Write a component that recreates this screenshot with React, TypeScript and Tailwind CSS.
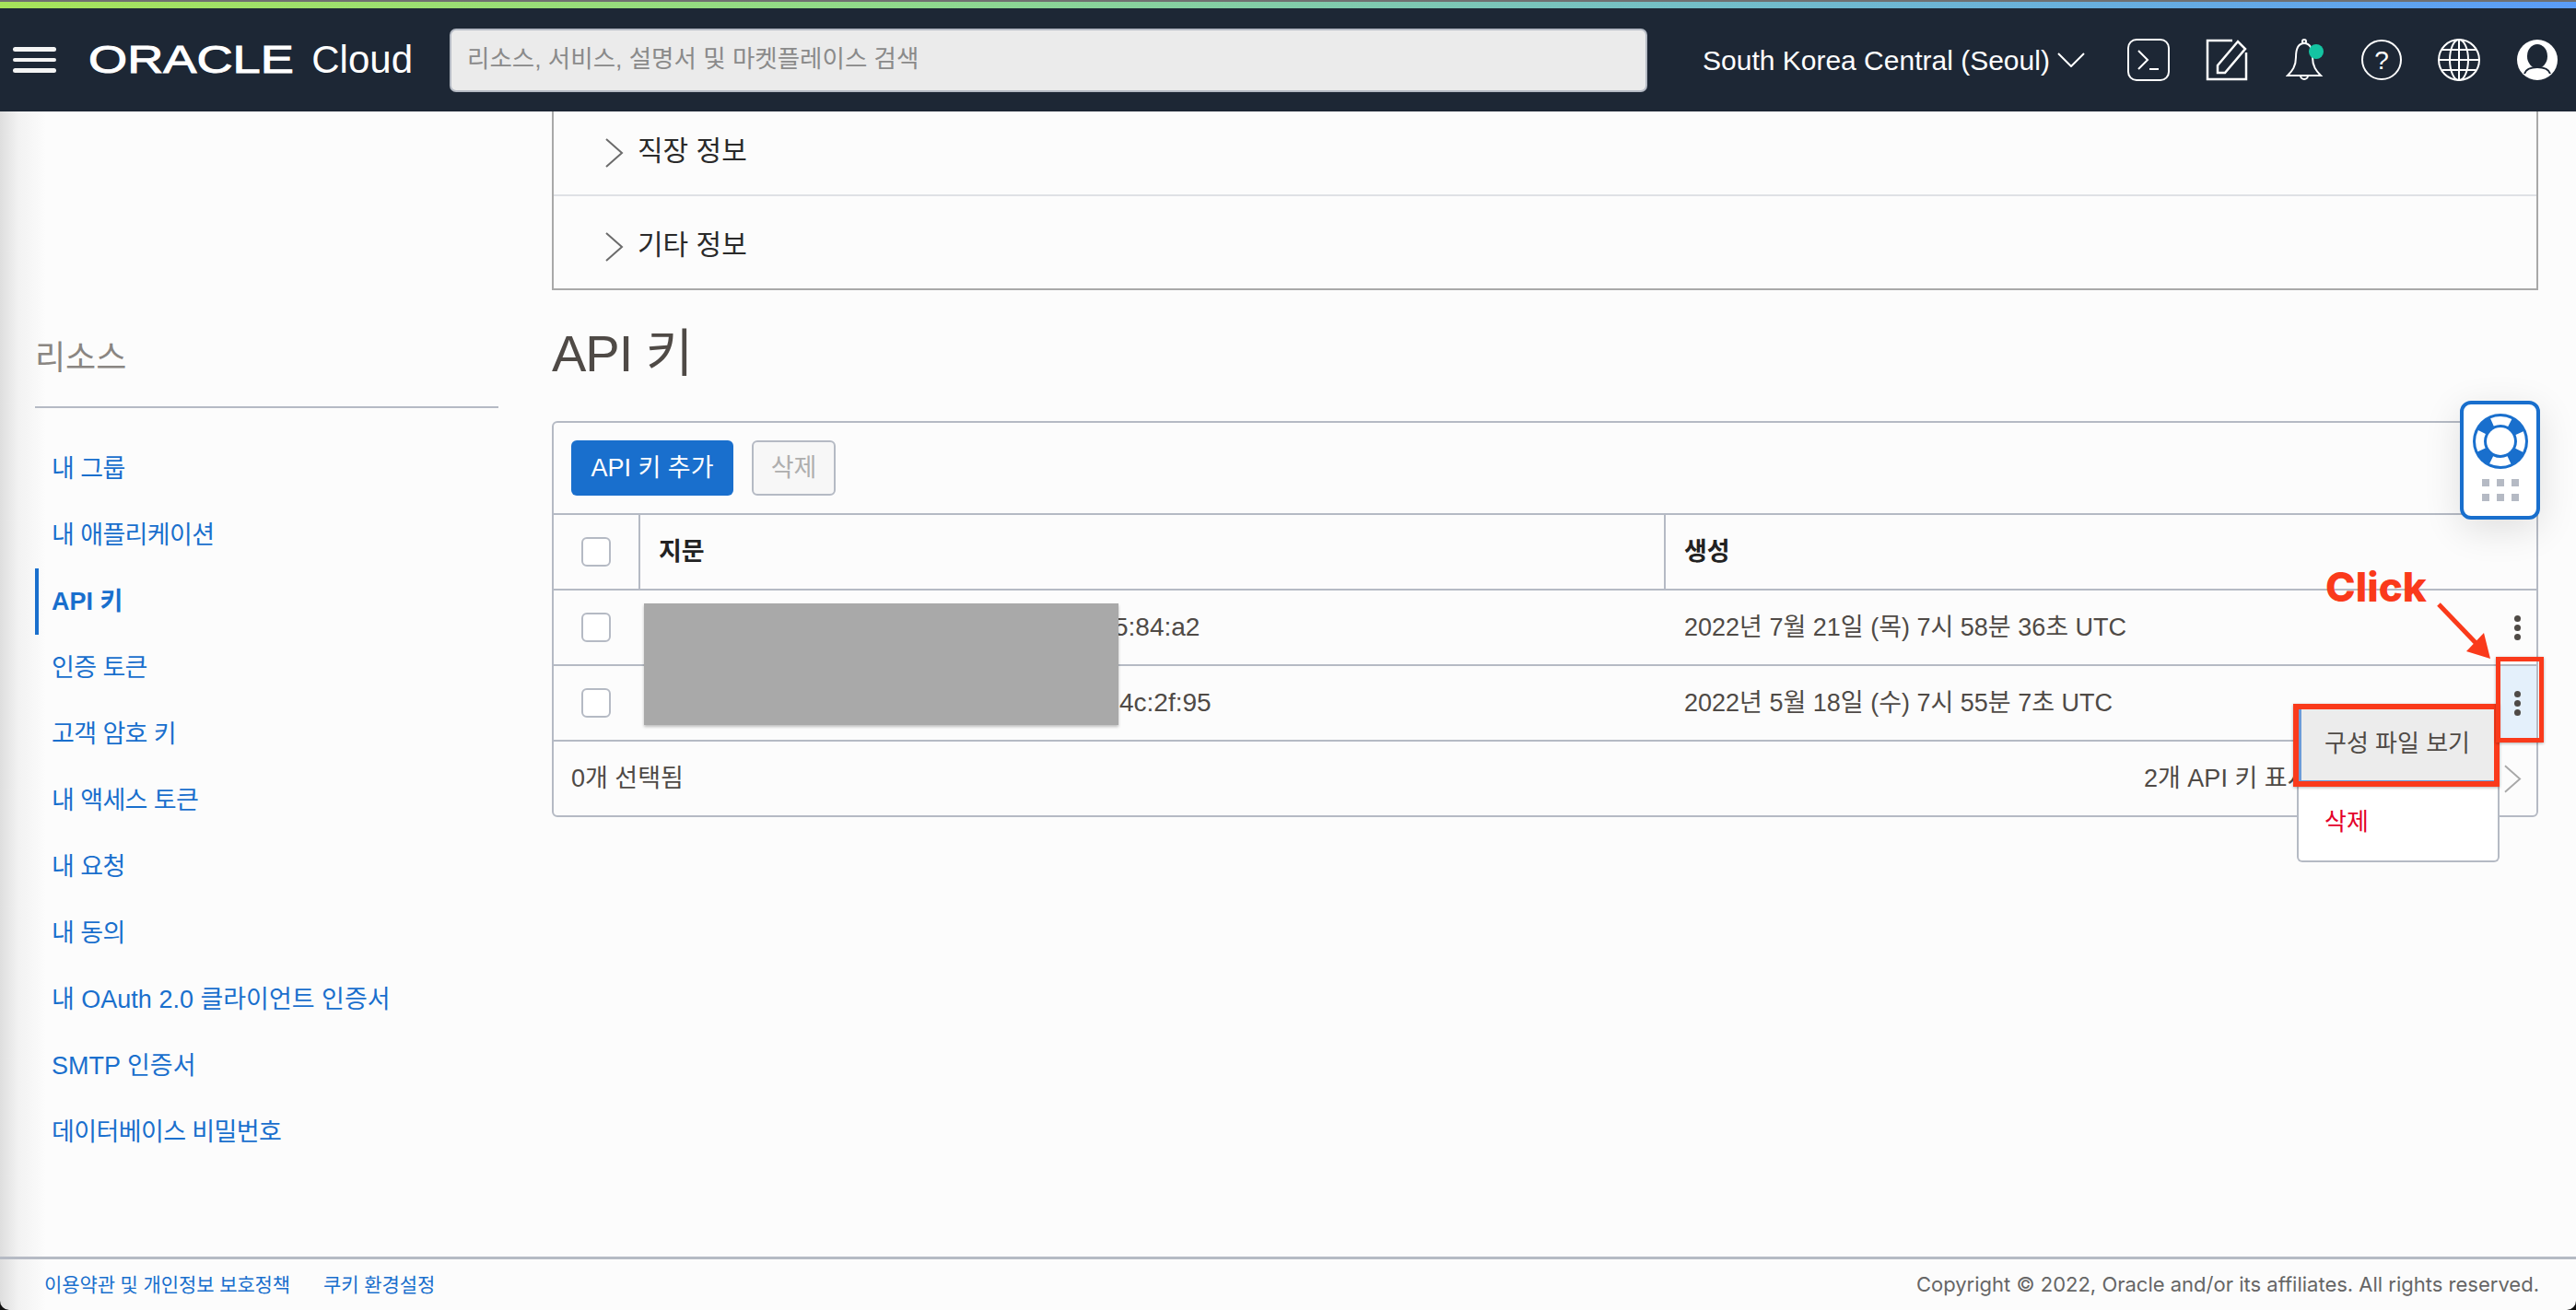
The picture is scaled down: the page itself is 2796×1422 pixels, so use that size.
import { ReactNode } from 'react';

const resourceLinks = [
  '내 그룹',
  '내 애플리케이션',
  'API 키',
  '인증 토큰',
  '고객 암호 키',
  '내 액세스 토큰',
  '내 요청',
  '내 동의',
  '내 OAuth 2.0 클라이언트 인증서',
  'SMTP 인증서',
  '데이터베이스 비밀번호',
];

const Chevron = ({ className }: { className: string }) => (
  <svg className={className} viewBox="0 0 20 32" fill="none" stroke="currentColor" strokeWidth="2">
    <path d="M1 1l17 15L1 31" />
  </svg>
);

const Kebab = () => (
  <div className="flex flex-col gap-[3px]">
    <span className="size-[7px] rounded-full bg-[#4f4a46]" />
    <span className="size-[7px] rounded-full bg-[#4f4a46]" />
    <span className="size-[7px] rounded-full bg-[#4f4a46]" />
  </div>
);

const Checkbox = () => <span className="block size-[32px] rounded-[6px] border-2 border-[#b5bac4] bg-white" />;

const Header = () => (
  <header className="flex h-[112px] shrink-0 items-center bg-[#1d2735] text-white">
    <div className="ml-[14px] flex h-[28px] w-[47px] flex-col justify-between">
      <span className="h-[5px] rounded-sm bg-[#f4f4f4]" />
      <span className="h-[4px] rounded-sm bg-[#f4f4f4]" />
      <span className="h-[5px] rounded-sm bg-[#f4f4f4]" />
    </div>
    <div className="ml-[35px] flex w-[352px] items-center">
      <span className="w-[243px] origin-left scale-x-[1.29] text-[42px] leading-none [-webkit-text-stroke:1px_white]">ORACLE</span>
      <span className="text-[42px] leading-none">Cloud</span>
    </div>
    <div className="ml-[40px] flex h-[69px] w-[1300px] items-center rounded-[7px] border-2 border-[#b5bac4] bg-[#ebebeb] px-[17px] text-[26.5px] text-[#8a8a8a]">
      리소스, 서비스, 설명서 및 마켓플레이스 검색
    </div>
    <span className="ml-[60px] text-[30px] whitespace-nowrap">South Korea Central (Seoul)</span>
    <svg className="ml-[8px] h-[16px] w-[30px]" viewBox="0 0 30 16" fill="none" stroke="currentColor" strokeWidth="2">
      <path d="M1 1l14 14L29 1" />
    </svg>
    <svg className="ml-[46px] size-[46px]" viewBox="0 0 46 46" fill="none" stroke="currentColor" strokeWidth="2">
      <rect x="1" y="1" width="44" height="44" rx="9" />
      <path d="M12 13l10 10-10 10M24 33h10" />
    </svg>
    <svg className="ml-[39px] size-[46px]" viewBox="0 0 46 46" fill="none" stroke="currentColor" strokeWidth="2.5">
      <path d="M29 2H2v42h42V15" />
      <path d="M13 29L35 3l8 8-22 26h-8z" />
    </svg>
    <svg className="ml-[41px] h-[46px] w-[42px]" viewBox="0 0 42 46" fill="none" stroke="currentColor" strokeWidth="2">
      <circle cx="20" cy="3" r="2" />
      <path d="M20 5c-7 0-9 7-9 15 0 10-4 15-9 20h36c-5-5-9-10-9-20 0-8-2-15-9-15z" />
      <path d="M16 40a4 4 0 0 0 8 0" />
      <ellipse cx="33" cy="14" rx="8" ry="8" fill="#14c4a2" stroke="none" />
    </svg>
    <svg className="ml-[40px] size-[44px]" viewBox="0 0 44 44" fill="none" stroke="currentColor" strokeWidth="2">
      <circle cx="22" cy="22" r="21" />
      <text x="22" y="32" textAnchor="middle" fontSize="28" fill="currentColor" stroke="none">?</text>
    </svg>
    <svg className="ml-[39px] size-[46px]" viewBox="0 0 46 46" fill="none" stroke="currentColor" strokeWidth="2">
      <circle cx="23" cy="23" r="22" />
      <ellipse cx="23" cy="23" rx="10" ry="22" />
      <path d="M23 1v44M1 23h44M5 12h36M5 34h36" />
    </svg>
    <svg className="ml-[40px] size-[44px]" viewBox="0 0 44 44">
      <circle cx="22" cy="22" r="22" fill="#fff" />
      <ellipse cx="22" cy="18" rx="11" ry="13" fill="#1d2735" />
      <path d="M8 37c2-6 8-7 14-7s12 1 14 7" fill="none" stroke="#1d2735" strokeWidth="2" />
    </svg>
  </header>
);

const Sidebar = () => (
  <aside className="w-[599px] shrink-0 pr-[58px] pl-[38px]">
    <div className="mt-[246px] border-b-2 border-[#b5bac4] pb-[30px] text-[36px] leading-[44px] text-[#8a8682]">리소스</div>
    <ul className="mt-[30px]">
      {resourceLinks.map((label) => (
        <li
          key={label}
          className={
            label === 'API 키'
              ? 'flex h-[72px] items-center border-l-4 border-[#196fcd] pl-[14px] text-[27px] font-bold text-[#196fcd]'
              : /[A-Za-z]/.test(label)
                ? 'flex h-[72px] items-center pl-[18px] text-[27px] text-[#196fcd]'
                : 'flex h-[72px] items-center pl-[18px] text-[27px] tracking-[-0.6px] text-[#196fcd]'
          }
        >
          {label}
        </li>
      ))}
    </ul>
  </aside>
);

const Row = ({ fingerprintClass, fingerprint, created, active }: { fingerprintClass: string; fingerprint: string; created: string; active?: boolean }) => (
  <div className="grid h-[82px] grid-cols-[92px_1113px_1fr_42px] items-center border-b-2 border-[#b5bac4] text-[#4f4a46]">
    <div className="flex justify-center"><Checkbox /></div>
    <div className={fingerprintClass}>{fingerprint}</div>
    <div className="pl-[22px] text-[27px] whitespace-nowrap">{created}</div>
    <div className={active ? 'flex h-full items-center justify-center bg-[#e4f0fb]' : 'flex h-full items-center justify-center'}>
      <Kebab />
    </div>
  </div>
);

const HeadCell = ({ children, className }: { children: ReactNode; className: string }) => (
  <div className={className}>{children}</div>
);

const ApiKeyTable = () => (
  <section className="rounded-[6px] border-2 border-[#b5bac4]">
    <div className="flex h-[100px] items-center gap-[20px] border-b-2 border-[#b5bac4] pl-[19px]">
      <button className="h-[60px] w-[176px] rounded-[6px] bg-[#196fcd] text-[27px] text-white">API 키 추가</button>
      <button className="h-[60px] w-[91px] rounded-[6px] border-2 border-[#b5bac4] bg-[#f7f7f7] text-[27px] text-[#aeaeae]">삭제</button>
    </div>
    <div className="grid h-[82px] grid-cols-[92px_1113px_1fr] border-b-2 border-[#b5bac4] text-[27px] font-bold text-[#222]">
      <HeadCell className="flex items-center justify-center"><Checkbox /></HeadCell>
      <HeadCell className="flex items-center border-l-2 border-[#b5bac4] pl-[20px]">지문</HeadCell>
      <HeadCell className="flex items-center border-l-2 border-[#b5bac4] pl-[20px]">생성</HeadCell>
    </div>
    <Row fingerprintClass="pl-[516px] text-[28px]" fingerprint="5:84:a2" created="2022년 7월 21일 (목) 7시 58분 36초 UTC" />
    <Row fingerprintClass="pl-[522px] text-[28px]" fingerprint="4c:2f:95" created="2022년 5월 18일 (수) 7시 55분 7초 UTC" active />
    <div className="flex h-[80px] items-center justify-between pr-[16px] pl-[19px] text-[27px] text-[#4f4a46]">
      <span>0개 선택됨</span>
      <div className="flex items-center">
        <span className="w-[391px] whitespace-nowrap">2개 API 키 표시</span>
        <Chevron className="h-[31px] w-[19px] text-[#a8a8a8]" />
      </div>
    </div>
  </section>
);

const Content = () => (
  <main className="min-w-0 flex-1 pr-[41px]">
    <div className="border-x-2 border-b-2 border-[#a9a9a9] text-[30px] text-[#2a2a2a]">
      <div className="flex h-[92px] items-center gap-[15px] border-b-2 border-[#dfe1e5] pl-[56px]">
        <Chevron className="h-[32px] w-[20px] text-[#6b6b6b]" />
        <span className="pb-[6px]">직장 정보</span>
      </div>
      <div className="flex h-[100px] items-center gap-[15px] pt-[5px] pl-[56px]">
        <Chevron className="mt-[4px] h-[32px] w-[20px] text-[#6b6b6b]" />
        기타 정보
      </div>
    </div>
    <h1 className="mt-[37px] mb-[41px] text-[56px] leading-[64px] tracking-[-1px] text-[#4f4a46]">API 키</h1>
    <ApiKeyTable />
  </main>
);

const Footer = () => (
  <footer className="flex h-[58px] shrink-0 items-center border-t-[3px] border-[#b5bac4] pr-[40px] pl-[48px] text-[21px]">
    <span className="tracking-[-0.1px] text-[#196fcd]">이용약관 및 개인정보 보호정책</span>
    <span className="ml-[36px] tracking-[-0.1px] text-[#196fcd]">쿠키 환경설정</span>
    <span className="ml-auto font-['Inter',sans-serif] text-[22px] text-[#666]">Copyright © 2022, Oracle and/or its affiliates. All rights reserved.</span>
  </footer>
);

const HelpWidget = () => (
  <div className="absolute top-[435px] left-[2670px] flex h-[129px] w-[87px] flex-col items-center rounded-[12px] border-4 border-[#196fcd] bg-white pt-[10px] shadow-[0_10px_40px_rgba(0,0,0,0.12)]">
    <svg className="size-[60px]" viewBox="0 0 60 60">
      <circle cx="30" cy="30" r="30" fill="#196fcd" />
      <circle cx="30" cy="30" r="22.5" fill="none" stroke="#fff" strokeWidth="9" strokeDasharray="20 15.34" strokeDashoffset="10" />
      <circle cx="30" cy="30" r="15" fill="#fff" />
    </svg>
    <div className="mt-[11px] grid grid-cols-3 gap-[8px]">
      {[0, 1, 2, 3, 4, 5].map((i) => (
        <span key={i} className="size-[8px] bg-[#b5bac4]" />
      ))}
    </div>
  </div>
);

const RowMenu = () => (
  <div className="absolute top-[764px] left-[2493px] h-[172px] w-[220px] rounded-b-[6px] border-2 border-t-0 border-[#b5bac4] bg-white text-[26px]">
    <div className="flex h-[86px] items-center border-[3px] border-[#6b9bd8] bg-[#ececec] pl-[25px] text-[#4f4a46]">구성 파일 보기</div>
    <div className="flex h-[84px] items-center pl-[28px] text-[#e4002b]">삭제</div>
  </div>
);

export default function App() {
  return (
    <div className="relative flex h-[1422px] w-[2796px] flex-col overflow-hidden bg-[#fcfcfc] bg-[linear-gradient(to_right,#dedede,#f2f2f2_20px,#fcfcfc_50px)] font-['Liberation_Sans','Noto_Sans_CJK_KR',sans-serif]">
      <div className="h-[2px] shrink-0 bg-[#6f6f70]" />
      <div className="h-[7px] shrink-0 bg-[linear-gradient(to_right,#a6e35a,#8fd98c_35%,#74bfc6_65%,#5a9cf8)]" />
      <Header />
      <div className="flex min-h-0 flex-1">
        <Sidebar />
        <Content />
      </div>
      <Footer />

      {/* redacted fingerprints */}
      <div className="absolute top-[655px] left-[699px] h-[132px] w-[515px] bg-[#a9a9a9] shadow-[0_2px_3px_rgba(0,0,0,0.25)]" />
      <HelpWidget />
      <RowMenu />

      {/* screenshot annotations */}
      <div className="absolute top-[764px] left-[2489px] h-[90px] w-[224px] border-[6px] border-[#fa3a1b] shadow-[0_1px_3px_rgba(0,0,0,0.3)]" />
      <div className="absolute top-[713px] left-[2709px] h-[93px] w-[52px] border-[5px] border-[#fa3a1b] shadow-[0_1px_3px_rgba(0,0,0,0.3)]" />
      <span className="absolute top-[612px] left-[2524px] font-['Inter',sans-serif] text-[44px] leading-[50px] font-extrabold text-[#fa3a1b]">Click</span>
      <svg className="absolute top-[650px] left-[2640px] h-[70px] w-[70px]" viewBox="0 0 70 70">
        <path d="M7 6l48 50" fill="none" stroke="#fa3a1b" strokeWidth="5" />
        <path d="M63 65L37 57 56 37z" fill="#fa3a1b" />
      </svg>

      {/* window corners */}
      <svg className="absolute bottom-0 left-0 size-[10px]" viewBox="0 0 10 10">
        <path d="M0 0a10 10 0 0 0 10 10H0z" fill="#111" />
      </svg>
      <svg className="absolute right-0 bottom-0 size-[10px]" viewBox="0 0 10 10">
        <path d="M10 0a10 10 0 0 1-10 10h10z" fill="#111" />
      </svg>
    </div>
  );
}
